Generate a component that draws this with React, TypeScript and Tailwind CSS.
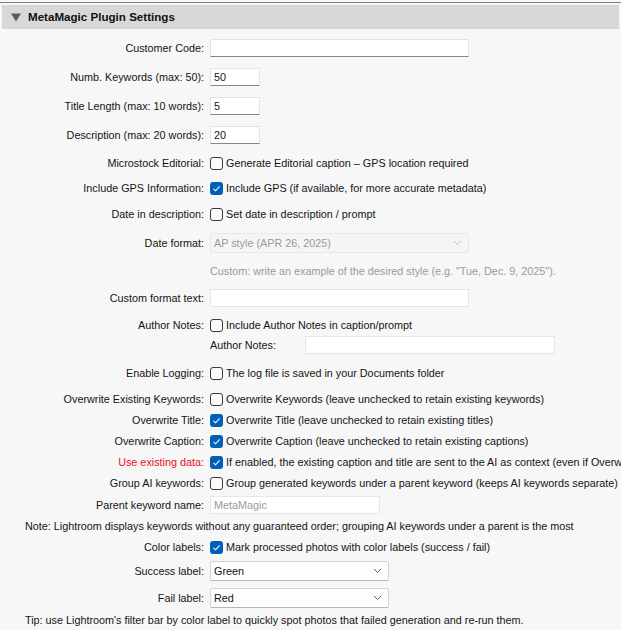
import React from "react";

type RowProps = {
  label?: string;
  mt: string;
  red?: boolean;
  children?: React.ReactNode;
};

const Row = ({ label, mt, red, children }: RowProps) => {
  return (
    <div className={`flex items-center h-[20px] ${mt}`}>
      <div className={`w-[204px] shrink-0 text-right ${red ? "text-[#e81123]" : ""}`}>{label}</div>
      <div className="ml-[6px] flex items-center">{children}</div>
    </div>
  );
};

const Check = ({ on, text }: { on?: boolean; text: string }) => {
  return (
    <div className="flex items-center">
      {on ? (
        <span className="w-[13px] h-[13px] rounded-[3px] bg-[#005fb8] flex items-center justify-center">
          <svg width="13" height="13" viewBox="0 0 13 13">
            <polyline points="3.5,6.8 5.6,8.8 9.6,4.4" fill="none" stroke="#ffffff" strokeWidth="1.1" />
          </svg>
        </span>
      ) : (
        <span className="w-[13px] h-[13px] rounded-[3px] border border-[#3c3c3c] bg-[#fafafa]" />
      )}
      <span className="ml-[3px]">{text}</span>
    </div>
  );
};

const Field = ({ w, value, off }: { w: string; value?: string; off?: boolean }) => {
  return (
    <div
      className={`${w} h-[18px] px-[3px] flex items-center border ${
        off
          ? "border-[#e6e6e6] bg-white text-[#9a9a9a]"
          : "border-[#e3e3e3] border-b-[#858585] bg-white"
      }`}
    >
      {value}
    </div>
  );
};

const Chevron = ({ c }: { c: string }) => (
  <svg width="9" height="6" viewBox="0 0 9 6" className="ml-auto">
    <polyline points="1,1 4.5,4.5 8,1" fill="none" stroke={c} strokeWidth="1" />
  </svg>
);

const Select = ({ w, value, off }: { w: string; value: string; off?: boolean }) => {
  return (
    <div
      className={`${w} h-[20px] pl-[3px] pr-[6px] flex items-center rounded-[2px] border ${
        off
          ? "border-[#e8e8e8] bg-[#f5f5f5] text-[#9a9a9a]"
          : "border-[#d4d4d4] border-b-[#b5b5b5] bg-[#fdfdfd]"
      }`}
    >
      <span>{value}</span>
      <Chevron c={off ? "#c4c4c4" : "#606060"} />
    </div>
  );
};

const App = () => {
  return (
    <div className="w-[621px] h-[630px] overflow-hidden bg-[#f7f7f7] text-[#141414] text-[10.8px] leading-[14px] whitespace-nowrap font-['Liberation_Sans',Arial,sans-serif]">
      <div className="pt-[2px]">
        <div className="h-px bg-[#7f7f7f]" />
        <div className="mt-[2px] ml-[2px] w-[617px] h-[24px] bg-[#d8d8d8] flex items-center">
          <svg width="10" height="9" viewBox="0 0 10 9" className="ml-[9px]">
            <polygon points="0,0.5 10,0.5 5,8.5" fill="#5b5b5b" />
          </svg>
          <span className="ml-[7px] text-[11.6px] font-bold text-[#111]">MetaMagic Plugin Settings</span>
        </div>
      </div>

      <Row label="Customer Code:" mt="mt-[9px]">
        <Field w="w-[259px]" />
      </Row>
      <Row label="Numb. Keywords (max: 50):" mt="mt-[9px]">
        <Field w="w-[50px]" value="50" />
      </Row>
      <Row label="Title Length (max: 10 words):" mt="mt-[9px]">
        <Field w="w-[50px]" value="5" />
      </Row>
      <Row label="Description (max: 20 words):" mt="mt-[9px]">
        <Field w="w-[50px]" value="20" />
      </Row>
      <Row label="Microstock Editorial:" mt="mt-[8px]">
        <Check text="Generate Editorial caption – GPS location required" />
      </Row>
      <Row label="Include GPS Information:" mt="mt-[5px]">
        <Check on text="Include GPS (if available, for more accurate metadata)" />
      </Row>
      <Row label="Date in description:" mt="mt-[6px]">
        <Check text="Set date in description / prompt" />
      </Row>
      <Row label="Date format:" mt="mt-[9px]">
        <Select w="w-[259px]" value="AP style (APR 26, 2025)" off />
      </Row>
      <Row mt="mt-[8px]">
        <span className="text-[#9a9a9a]">
          Custom: write an example of the desired style (e.g. "Tue, Dec. 9, 2025").
        </span>
      </Row>
      <Row label="Custom format text:" mt="mt-[7px]">
        <Field w="w-[259px]" off />
      </Row>
      <Row label="Author Notes:" mt="mt-[7px]">
        <Check text="Include Author Notes in caption/prompt" />
      </Row>
      <Row mt="mt-0">
        <span className="w-[95px]">Author Notes:</span>
        <Field w="w-[250px]" off />
      </Row>
      <Row label="Enable Logging:" mt="mt-[8px]">
        <Check text="The log file is saved in your Documents folder" />
      </Row>
      <Row label="Overwrite Existing Keywords:" mt="mt-[6px]">
        <Check text="Overwrite Keywords (leave unchecked to retain existing keywords)" />
      </Row>
      <Row label="Overwrite Title:" mt="mt-px">
        <Check on text="Overwrite Title (leave unchecked to retain existing titles)" />
      </Row>
      <Row label="Overwrite Caption:" mt="mt-px">
        <Check on text="Overwrite Caption (leave unchecked to retain existing captions)" />
      </Row>
      <Row label="Use existing data:" mt="mt-px" red>
        <Check
          on
          text="If enabled, the existing caption and title are sent to the AI as context (even if Overwrite is unchecked)"
        />
      </Row>
      <Row label="Group AI keywords:" mt="mt-px">
        <Check text="Group generated keywords under a parent keyword (keeps AI keywords separate)" />
      </Row>
      <Row label="Parent keyword name:" mt="mt-[2px]">
        <Field w="w-[170px]" value="MetaMagic" off />
      </Row>
      <div className="mt-px h-[20px] flex items-center pl-[25px]">
        Note: Lightroom displays keywords without any guaranteed order; grouping AI keywords under a parent is the most
      </div>
      <Row label="Color labels:" mt="mt-px">
        <Check on text="Mark processed photos with color labels (success / fail)" />
      </Row>
      <Row label="Success label:" mt="mt-[4px]">
        <Select w="w-[179px]" value="Green" />
      </Row>
      <Row label="Fail label:" mt="mt-[7px]">
        <Select w="w-[179px]" value="Red" />
      </Row>
      <div className="mt-[2px] h-[20px] flex items-center pl-[25px]">
        Tip: use Lightroom's filter bar by color label to quickly spot photos that failed generation and re-run them.
      </div>
    </div>
  );
};

export default App;
